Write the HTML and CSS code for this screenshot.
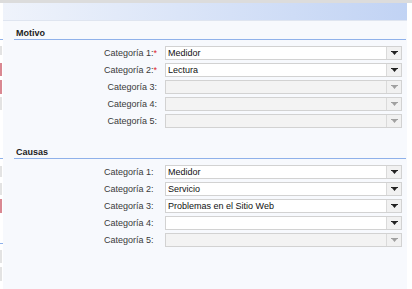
FILE: index.html
```html
<!DOCTYPE html>
<html lang="es">
<head>
  <meta charset="UTF-8">
  <meta name="viewport" content="width=device-width, initial-scale=1.0">
  <title>Motivo y Causas</title>
  <link rel="stylesheet" href="styles.css">
</head>
<body>
<div class="topline"></div>
<div class="page">
  <!-- borde recortado del panel vecino -->
  <div class="edge">
    <div class="nub blue"></div>
    <div class="nub gray"></div>
    <div class="nub red"></div>
    <div class="nub red"></div>
    <div class="nub gray"></div>
    <div class="nub blue"></div>
    <div class="nub gray"></div>
    <div class="nub gray"></div>
    <div class="nub red"></div>
    <div class="nub blue"></div>
    <div class="nub gray"></div>
    <div class="nub gray"></div>
  </div>

  <div class="panel">
    <div class="band"></div>

    <div class="section">
      <div class="section-title">Motivo</div>
      <div class="rows">
        <label class="label">Categoría 1:<span class="req">*</span></label>
        <div class="select"><span class="value">Medidor</span><span class="arrow"><svg width="7" height="4" viewBox="0 0 7 4"><path d="M0 0h7v1H0zM1 1h5L3.5 4z"/></svg></span></div>
        <label class="label">Categoría 2:<span class="req">*</span></label>
        <div class="select"><span class="value">Lectura</span><span class="arrow"><svg width="7" height="4" viewBox="0 0 7 4"><path d="M0 0h7v1H0zM1 1h5L3.5 4z"/></svg></span></div>
        <label class="label">Categoría 3:</label>
        <div class="select disabled"><span class="value"></span><span class="arrow"><svg width="7" height="4" viewBox="0 0 7 4"><path d="M0 0h7v1H0zM1 1h5L3.5 4z"/></svg></span></div>
        <label class="label">Categoría 4:</label>
        <div class="select disabled"><span class="value"></span><span class="arrow"><svg width="7" height="4" viewBox="0 0 7 4"><path d="M0 0h7v1H0zM1 1h5L3.5 4z"/></svg></span></div>
        <label class="label">Categoría 5:</label>
        <div class="select disabled"><span class="value"></span><span class="arrow"><svg width="7" height="4" viewBox="0 0 7 4"><path d="M0 0h7v1H0zM1 1h5L3.5 4z"/></svg></span></div>
      </div>
    </div>

    <div class="section causas">
      <div class="section-title">Causas</div>
      <div class="rows">
        <label class="label">Categoría 1:<span class="req hidden">*</span></label>
        <div class="select"><span class="value">Medidor</span><span class="arrow"><svg width="7" height="4" viewBox="0 0 7 4"><path d="M0 0h7v1H0zM1 1h5L3.5 4z"/></svg></span></div>
        <label class="label">Categoría 2:<span class="req hidden">*</span></label>
        <div class="select"><span class="value">Servicio</span><span class="arrow"><svg width="7" height="4" viewBox="0 0 7 4"><path d="M0 0h7v1H0zM1 1h5L3.5 4z"/></svg></span></div>
        <label class="label">Categoría 3:<span class="req hidden">*</span></label>
        <div class="select"><span class="value">Problemas en el Sitio Web</span><span class="arrow"><svg width="7" height="4" viewBox="0 0 7 4"><path d="M0 0h7v1H0zM1 1h5L3.5 4z"/></svg></span></div>
        <label class="label">Categoría 4:<span class="req hidden">*</span></label>
        <div class="select"><span class="value"></span><span class="arrow"><svg width="7" height="4" viewBox="0 0 7 4"><path d="M0 0h7v1H0zM1 1h5L3.5 4z"/></svg></span></div>
        <label class="label">Categoría 5:<span class="req hidden">*</span></label>
        <div class="select disabled"><span class="value"></span><span class="arrow"><svg width="7" height="4" viewBox="0 0 7 4"><path d="M0 0h7v1H0zM1 1h5L3.5 4z"/></svg></span></div>
      </div>
    </div>
  </div>
</div>
</body>
</html>
```

FILE: styles.css
```css
body {
    margin: 0;
    background-color: #ffffff;
    font-family: "Liberation Sans", Arial, sans-serif;
    font-size: 9px;
    color: #333;
}

.topline {
    height: 3px;
    background-color: #dcdcdc;
}

.page {
    display: flex;
    height: 286px;
}

/* restos del panel de la izquierda */
.edge {
    width: 3px;
    display: flex;
    flex-direction: column;
}

.nub {
    width: 2px;
}
.nub.gray { background-color: #e3e3e3; }
.nub.red { background-color: #d98892; }
.nub.blue { background-color: #8fb1ea; height: 1px; width: 3px; }

.nub:nth-child(1) { margin-top: 36px; }
.nub:nth-child(2) { margin-top: 6px; height: 9px; }
.nub:nth-child(3) { margin-top: 8px; height: 13px; }
.nub:nth-child(4) { margin-top: 4px; height: 14px; }
.nub:nth-child(5) { margin-top: 3px; height: 13px; }
.nub:nth-child(6) { margin-top: 48px; }
.nub:nth-child(7) { margin-top: 7px; height: 11px; }
.nub:nth-child(8) { margin-top: 6px; height: 12px; }
.nub:nth-child(9) { margin-top: 4px; height: 14px; }
.nub:nth-child(10) { margin-top: 30px; }
.nub:nth-child(11) { margin-top: 6px; height: 13px; }
.nub:nth-child(12) { margin-top: 4px; height: 14px; }

.panel {
    width: 404px;
    background-color: #f7f9fd;
}

.band {
    height: 17px;
    background: linear-gradient(to right, #eff3fb, #c1d3f4);
    border-bottom: 1px solid #dfe5f0;
}

.section {
    margin: 7px 1px 0 11px;
}

.section.causas {
    margin-top: 19px;
}

.section-title {
    line-height: 11px;
    padding-left: 2px;
    font-weight: bold;
    color: #222;
    border-bottom: 1px solid #8fb1ea;
}

.rows {
    display: grid;
    grid-template-columns: 143px 237px;
    column-gap: 8px;
    row-gap: 3px;
    padding-top: 6px;
}

.label {
    text-align: right;
    line-height: 14px;
    color: #3a3a3a;
}

.req {
    color: #e0242c;
}
.req.hidden {
    visibility: hidden;
}

/* combo */
.select {
    display: flex;
    height: 14px;
    box-sizing: border-box;
    border: 1px solid #d2d2d2;
    background-color: #ffffff;
}

.select .value {
    flex: 1;
    padding-left: 2px;
    line-height: 12px;
    color: #111;
    white-space: nowrap;
}

.select .arrow {
    width: 14px;
    display: flex;
    align-items: center;
    justify-content: center;
    border-left: 1px solid #dadada;
    background-color: #f1f1f1;
}

.select .arrow svg {
    fill: #222;
}

.select.disabled {
    background-color: #f3f3f3;
}

.select.disabled .arrow svg {
    fill: #a0a0a0;
}
```
